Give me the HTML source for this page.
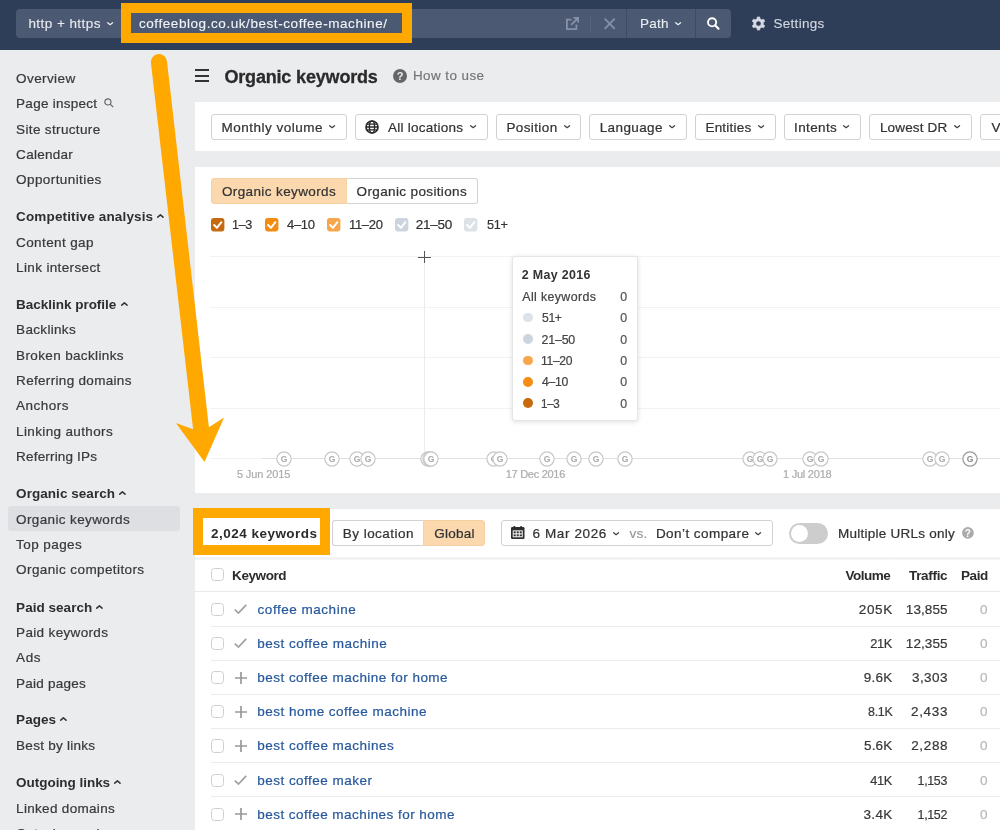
<!DOCTYPE html>
<html><head><meta charset="utf-8"><title>Organic keywords</title>
<style>
html,body{margin:0;padding:0;}
body{width:1000px;height:830px;overflow:hidden;position:relative;background:#ebecee;font-family:"Liberation Sans",sans-serif;}
.t{position:absolute;white-space:nowrap;-webkit-text-stroke:0.22px currentColor;}
.b{position:absolute;box-sizing:border-box;}
svg{position:absolute;overflow:visible;}
#wrap{position:absolute;left:0;top:0;width:1000px;height:830px;will-change:transform;}
</style></head><body><div id="wrap">
<div class="b" style="left:0px;top:0px;width:1000px;height:49.5px;background:#2e3e59;"></div>
<div class="b" style="left:16px;top:9px;width:715px;height:29px;background:#4c5972;border-radius:4px;"></div>
<div class="b" style="left:121px;top:9px;width:1px;height:29px;background:#3d4b64;"></div>
<div class="b" style="left:626px;top:9px;width:1px;height:29px;background:#3d4b64;"></div>
<div class="b" style="left:694.8px;top:9px;width:1px;height:29px;background:#3d4b64;"></div>
<div class="b" style="left:590px;top:17px;width:1px;height:14px;background:#59657d;"></div>
<div class="t " style="top:14.10px;font-size:13.5px;line-height:20px;color:#e9ecf1;letter-spacing:0.441px;left:28.41px;-webkit-text-stroke-width:0.12px;">http + https</div>
<svg style="left:107.3px;top:22.25px" width="6.2" height="3.5"><path d="M0.65 0.65 L3.1 2.7 L5.55 0.65" fill="none" stroke="#e9ecf1" stroke-width="1.3" stroke-linecap="round" stroke-linejoin="round"/></svg>
<div class="b" style="left:121px;top:3px;width:291px;height:40px;border:10px solid #ffa800;background:#4c5972;"></div>
<div class="t " style="top:13.80px;font-size:13.5px;line-height:20px;color:#f2f4f7;letter-spacing:0.565px;left:138.99px;-webkit-text-stroke-width:0.12px;">coffeeblog.co.uk/best-coffee-machine/</div>
<svg style="left:566px;top:16.6px" width="13" height="13" viewBox="0 0 13 13"><path d="M5.4 2.6H0.9V12.1H10.4V7.6" fill="none" stroke="#8791a7" stroke-width="1.8"/><path d="M7.4 0.9H12.1V5.6" fill="none" stroke="#8791a7" stroke-width="1.8"/><path d="M12 1 L5.2 7.8" stroke="#8791a7" stroke-width="1.8"/></svg>
<svg style="left:604px;top:17.6px" width="11.4" height="11.6"><path d="M0.7 0.7L10.7 10.9M10.7 0.7L0.7 10.9" stroke="#8791a7" stroke-width="1.8"/></svg>
<div class="t " style="top:14.10px;font-size:13.5px;line-height:20px;color:#e9ecf1;letter-spacing:0.217px;left:640.02px;-webkit-text-stroke-width:0.12px;">Path</div>
<svg style="left:674.8px;top:22.25px" width="6.2" height="3.5"><path d="M0.65 0.65 L3.1 2.7 L5.55 0.65" fill="none" stroke="#e9ecf1" stroke-width="1.3" stroke-linecap="round" stroke-linejoin="round"/></svg>
<svg style="left:705px;top:15px" width="16" height="16"><circle cx="7.1" cy="7.3" r="4.1" fill="none" stroke="#fff" stroke-width="1.9"/><path d="M10.3 10.5L13.5 13.7" stroke="#fff" stroke-width="2.2" stroke-linecap="round"/></svg>
<svg style="left:750.7px;top:15.8px" width="15" height="15" viewBox="0 0 15 15"><path fill="#d6dae2" fill-rule="evenodd" stroke="#d6dae2" stroke-width="0.6" stroke-linejoin="round" d="M5.99 2.84 L6.31 0.91 L8.69 0.91 L9.01 2.84 L10.78 3.86 L12.62 3.18 L13.80 5.23 L12.29 6.48 L12.29 8.52 L13.80 9.77 L12.62 11.82 L10.78 11.14 L9.01 12.16 L8.69 14.09 L6.31 14.09 L5.99 12.16 L4.22 11.14 L2.38 11.82 L1.20 9.77 L2.71 8.52 L2.71 6.48 L1.20 5.23 L2.38 3.18 L4.22 3.86 Z M4.90 7.50 a2.6 2.6 0 1 0 5.2 0 a2.6 2.6 0 1 0 -5.2 0 Z"/></svg>
<div class="t " style="top:14.10px;font-size:13.5px;line-height:20px;color:#d3d8e0;letter-spacing:0.282px;left:773.52px;-webkit-text-stroke-width:0.12px;">Settings</div>
<div class="b" style="left:8px;top:506.2px;width:171.6px;height:25.2px;background:#dddfe3;border-radius:3px;"></div>
<div class="t " style="top:68.80px;font-size:13.5px;line-height:20px;color:#393939;letter-spacing:0.400px;left:16.10px;">Overview</div>
<div class="t " style="top:94.30px;font-size:13.5px;line-height:20px;color:#393939;letter-spacing:0.268px;left:16.10px;">Page inspect</div>
<div class="t " style="top:119.60px;font-size:13.5px;line-height:20px;color:#393939;letter-spacing:0.347px;left:16.10px;">Site structure</div>
<div class="t " style="top:144.90px;font-size:13.5px;line-height:20px;color:#393939;letter-spacing:0.284px;left:16.10px;">Calendar</div>
<div class="t " style="top:170.20px;font-size:13.5px;line-height:20px;color:#393939;letter-spacing:0.411px;left:16.10px;">Opportunities</div>
<div class="t " style="top:207.20px;font-size:13.5px;line-height:20px;color:#2e2e2e;letter-spacing:0.142px;font-weight:700;-webkit-text-stroke-width:0;left:16.10px;">Competitive analysis</div>
<svg style="left:157.2px;top:214.25px" width="6.8" height="3.9"><path d="M0.75 3.15 L3.4 0.9 L6.05 3.15" fill="none" stroke="#333" stroke-width="1.5" stroke-linecap="round" stroke-linejoin="round"/></svg>
<div class="t " style="top:232.60px;font-size:13.5px;line-height:20px;color:#393939;letter-spacing:0.385px;left:16.10px;">Content gap</div>
<div class="t " style="top:257.80px;font-size:13.5px;line-height:20px;color:#393939;letter-spacing:0.358px;left:16.10px;">Link intersect</div>
<div class="t " style="top:294.80px;font-size:13.5px;line-height:20px;color:#2e2e2e;letter-spacing:-0.021px;font-weight:700;-webkit-text-stroke-width:0;left:16.10px;">Backlink profile</div>
<svg style="left:120.5px;top:301.85px" width="6.8" height="3.9"><path d="M0.75 3.15 L3.4 0.9 L6.05 3.15" fill="none" stroke="#333" stroke-width="1.5" stroke-linecap="round" stroke-linejoin="round"/></svg>
<div class="t " style="top:320.10px;font-size:13.5px;line-height:20px;color:#393939;letter-spacing:0.319px;left:16.10px;">Backlinks</div>
<div class="t " style="top:345.60px;font-size:13.5px;line-height:20px;color:#393939;letter-spacing:0.359px;left:16.10px;">Broken backlinks</div>
<div class="t " style="top:370.90px;font-size:13.5px;line-height:20px;color:#393939;letter-spacing:0.315px;left:16.10px;">Referring domains</div>
<div class="t " style="top:396.40px;font-size:13.5px;line-height:20px;color:#393939;letter-spacing:0.475px;left:16.10px;">Anchors</div>
<div class="t " style="top:421.80px;font-size:13.5px;line-height:20px;color:#393939;letter-spacing:0.356px;left:16.10px;">Linking authors</div>
<div class="t " style="top:447.10px;font-size:13.5px;line-height:20px;color:#393939;letter-spacing:0.175px;left:16.10px;">Referring IPs</div>
<div class="t " style="top:484.30px;font-size:13.5px;line-height:20px;color:#2e2e2e;letter-spacing:0.050px;font-weight:700;-webkit-text-stroke-width:0;left:16.10px;">Organic search</div>
<svg style="left:118.89999999999999px;top:491.35px" width="6.8" height="3.9"><path d="M0.75 3.15 L3.4 0.9 L6.05 3.15" fill="none" stroke="#333" stroke-width="1.5" stroke-linecap="round" stroke-linejoin="round"/></svg>
<div class="t " style="top:509.60px;font-size:13.5px;line-height:20px;color:#393939;letter-spacing:0.373px;left:16.10px;">Organic keywords</div>
<div class="t " style="top:535.00px;font-size:13.5px;line-height:20px;color:#393939;letter-spacing:0.417px;left:16.10px;">Top pages</div>
<div class="t " style="top:560.40px;font-size:13.5px;line-height:20px;color:#393939;letter-spacing:0.402px;left:16.10px;">Organic competitors</div>
<div class="t " style="top:597.90px;font-size:13.5px;line-height:20px;color:#2e2e2e;letter-spacing:0.035px;font-weight:700;-webkit-text-stroke-width:0;left:16.10px;">Paid search</div>
<svg style="left:96.1px;top:604.95px" width="6.8" height="3.9"><path d="M0.75 3.15 L3.4 0.9 L6.05 3.15" fill="none" stroke="#333" stroke-width="1.5" stroke-linecap="round" stroke-linejoin="round"/></svg>
<div class="t " style="top:622.70px;font-size:13.5px;line-height:20px;color:#393939;letter-spacing:0.336px;left:16.10px;">Paid keywords</div>
<div class="t " style="top:647.90px;font-size:13.5px;line-height:20px;color:#393939;letter-spacing:0.600px;left:16.10px;">Ads</div>
<div class="t " style="top:674.00px;font-size:13.5px;line-height:20px;color:#393939;letter-spacing:0.221px;left:16.10px;">Paid pages</div>
<div class="t " style="top:710.30px;font-size:13.5px;line-height:20px;color:#2e2e2e;letter-spacing:0.041px;font-weight:700;-webkit-text-stroke-width:0;left:16.10px;">Pages</div>
<svg style="left:60.1px;top:717.35px" width="6.8" height="3.9"><path d="M0.75 3.15 L3.4 0.9 L6.05 3.15" fill="none" stroke="#333" stroke-width="1.5" stroke-linecap="round" stroke-linejoin="round"/></svg>
<div class="t " style="top:735.60px;font-size:13.5px;line-height:20px;color:#393939;letter-spacing:0.267px;left:16.10px;">Best by links</div>
<div class="t " style="top:772.90px;font-size:13.5px;line-height:20px;color:#2e2e2e;letter-spacing:-0.037px;font-weight:700;-webkit-text-stroke-width:0;left:16.10px;">Outgoing links</div>
<svg style="left:114.2px;top:779.95px" width="6.8" height="3.9"><path d="M0.75 3.15 L3.4 0.9 L6.05 3.15" fill="none" stroke="#333" stroke-width="1.5" stroke-linecap="round" stroke-linejoin="round"/></svg>
<div class="t " style="top:798.70px;font-size:13.5px;line-height:20px;color:#393939;letter-spacing:0.314px;left:16.10px;">Linked domains</div>
<div class="t " style="top:824.20px;font-size:13.5px;line-height:20px;color:#393939;left:16.10px;">Outgoing anchors</div>
<svg style="left:103.9px;top:98.3px" width="10" height="10"><circle cx="3.9" cy="3.9" r="3.1" fill="none" stroke="#666" stroke-width="1.2"/><path d="M6.2 6.2L9.2 9.2" stroke="#666" stroke-width="1.2"/></svg>
<div class="b" style="left:195px;top:69.4px;width:14px;height:2px;background:#333;"></div>
<div class="b" style="left:195px;top:74.6px;width:14px;height:2px;background:#333;"></div>
<div class="b" style="left:195px;top:79.7px;width:14px;height:2px;background:#333;"></div>
<div class="t " style="top:66.80px;font-size:18.0px;line-height:20px;color:#2b2b2b;letter-spacing:-0.171px;font-weight:700;-webkit-text-stroke-width:0;left:224.40px;-webkit-text-stroke-width:0.3px;">Organic keywords</div>
<svg style="left:393px;top:69px" width="14" height="14"><circle cx="7" cy="7" r="7" fill="#666"/><text x="7" y="11" font-size="11" font-weight="700" fill="#ebecee" text-anchor="middle" font-family="Liberation Sans">?</text></svg>
<div class="t " style="top:65.90px;font-size:13.4px;line-height:20px;color:#777;letter-spacing:0.465px;left:412.89px;">How to use</div>
<div class="b" style="left:195px;top:102px;width:805px;height:49px;background:#fff;"></div>
<div class="b" style="left:211px;top:114px;width:135.5px;height:25.5px;background:#fff;border:1px solid #d2d2d2;border-radius:3px;"></div>
<div class="t " style="top:117.60px;font-size:13.5px;line-height:20px;color:#333;letter-spacing:0.502px;left:221.43px;">Monthly volume</div>
<svg style="left:329px;top:125.25px" width="6.2" height="3.5"><path d="M0.65 0.65 L3.1 2.7 L5.55 0.65" fill="none" stroke="#444" stroke-width="1.3" stroke-linecap="round" stroke-linejoin="round"/></svg>
<div class="b" style="left:355px;top:114px;width:133px;height:25.5px;background:#fff;border:1px solid #d2d2d2;border-radius:3px;"></div>
<div class="t " style="top:117.60px;font-size:13.5px;line-height:20px;color:#333;letter-spacing:0.242px;left:388.09px;">All locations</div>
<svg style="left:470px;top:125.25px" width="6.2" height="3.5"><path d="M0.65 0.65 L3.1 2.7 L5.55 0.65" fill="none" stroke="#444" stroke-width="1.3" stroke-linecap="round" stroke-linejoin="round"/></svg>
<div class="b" style="left:496px;top:114px;width:84.5px;height:25.5px;background:#fff;border:1px solid #d2d2d2;border-radius:3px;"></div>
<div class="t " style="top:117.60px;font-size:13.5px;line-height:20px;color:#333;letter-spacing:0.386px;left:506.43px;">Position</div>
<svg style="left:563.6px;top:125.25px" width="6.2" height="3.5"><path d="M0.65 0.65 L3.1 2.7 L5.55 0.65" fill="none" stroke="#444" stroke-width="1.3" stroke-linecap="round" stroke-linejoin="round"/></svg>
<div class="b" style="left:589px;top:114px;width:97.5px;height:25.5px;background:#fff;border:1px solid #d2d2d2;border-radius:3px;"></div>
<div class="t " style="top:117.60px;font-size:13.5px;line-height:20px;color:#333;letter-spacing:0.389px;left:599.72px;">Language</div>
<svg style="left:669px;top:125.25px" width="6.2" height="3.5"><path d="M0.65 0.65 L3.1 2.7 L5.55 0.65" fill="none" stroke="#444" stroke-width="1.3" stroke-linecap="round" stroke-linejoin="round"/></svg>
<div class="b" style="left:695px;top:114px;width:80.5px;height:25.5px;background:#fff;border:1px solid #d2d2d2;border-radius:3px;"></div>
<div class="t " style="top:117.60px;font-size:13.5px;line-height:20px;color:#333;letter-spacing:0.225px;left:705.42px;">Entities</div>
<svg style="left:758px;top:125.25px" width="6.2" height="3.5"><path d="M0.65 0.65 L3.1 2.7 L5.55 0.65" fill="none" stroke="#444" stroke-width="1.3" stroke-linecap="round" stroke-linejoin="round"/></svg>
<div class="b" style="left:783.5px;top:114px;width:77.5px;height:25.5px;background:#fff;border:1px solid #d2d2d2;border-radius:3px;"></div>
<div class="t " style="top:117.60px;font-size:13.5px;line-height:20px;color:#333;letter-spacing:0.358px;left:794.10px;">Intents</div>
<svg style="left:843.2px;top:125.25px" width="6.2" height="3.5"><path d="M0.65 0.65 L3.1 2.7 L5.55 0.65" fill="none" stroke="#444" stroke-width="1.3" stroke-linecap="round" stroke-linejoin="round"/></svg>
<div class="b" style="left:869px;top:114px;width:103px;height:25.5px;background:#fff;border:1px solid #d2d2d2;border-radius:3px;"></div>
<div class="t " style="top:117.60px;font-size:13.5px;line-height:20px;color:#333;letter-spacing:0.169px;left:879.92px;">Lowest DR</div>
<svg style="left:954px;top:125.25px" width="6.2" height="3.5"><path d="M0.65 0.65 L3.1 2.7 L5.55 0.65" fill="none" stroke="#444" stroke-width="1.3" stroke-linecap="round" stroke-linejoin="round"/></svg>
<div class="b" style="left:979.5px;top:114px;width:40px;height:25.5px;background:#fff;border:1px solid #d2d2d2;border-radius:3px;"></div>
<div class="t " style="top:117.60px;font-size:13.5px;line-height:20px;color:#333;left:991.39px;">Vo</div>
<svg style="left:365.3px;top:119.8px" width="14" height="14" viewBox="0 0 14 14"><circle cx="7" cy="7" r="6" fill="none" stroke="#2b2b2b" stroke-width="1.7"/><ellipse cx="7" cy="7" rx="2.6" ry="6" fill="none" stroke="#2b2b2b" stroke-width="1.4"/><path d="M1 7H13M1.9 4.1H12.1M1.9 9.9H12.1" stroke="#2b2b2b" stroke-width="1.3" fill="none"/></svg>
<div class="b" style="left:195px;top:166.5px;width:805px;height:326px;background:#fff;"></div>
<div class="b" style="left:210.9px;top:178.4px;width:136px;height:25.2px;background:#fbd8ae;border:1px solid #f7d0a0;border-radius:3px 0 0 3px;"></div>
<div class="b" style="left:346.5px;top:178.4px;width:131px;height:25.2px;background:#fff;border:1px solid #d2d2d2;border-left:none;border-radius:0 3px 3px 0;"></div>
<div class="t " style="top:181.80px;font-size:13.5px;line-height:20px;color:#333;letter-spacing:0.384px;left:221.93px;">Organic keywords</div>
<div class="t " style="top:181.80px;font-size:13.5px;line-height:20px;color:#333;letter-spacing:0.363px;left:356.62px;">Organic positions</div>
<svg style="left:210.9px;top:217.7px" width="13.4" height="13.4" viewBox="0 0 13.4 13.4"><rect width="13.4" height="13.4" rx="2.8" fill="#c66a10"/><path d="M3.1 7.0L5.9 9.8L10.4 4.2" fill="none" stroke="#fff" stroke-width="1.9" stroke-linecap="round" stroke-linejoin="round"/></svg>
<div class="t " style="top:215.10px;font-size:13.5px;line-height:20px;color:#333;letter-spacing:-0.350px;left:231.92px;transform:scaleX(0.9339);transform-origin:0 50%;">1–3</div>
<svg style="left:264.5px;top:217.7px" width="13.4" height="13.4" viewBox="0 0 13.4 13.4"><rect width="13.4" height="13.4" rx="2.8" fill="#f28c12"/><path d="M3.1 7.0L5.9 9.8L10.4 4.2" fill="none" stroke="#fff" stroke-width="1.9" stroke-linecap="round" stroke-linejoin="round"/></svg>
<div class="t " style="top:215.10px;font-size:13.5px;line-height:20px;color:#333;letter-spacing:-0.350px;left:286.95px;transform:scaleX(0.9667);transform-origin:0 50%;">4–10</div>
<svg style="left:327.3px;top:217.7px" width="13.4" height="13.4" viewBox="0 0 13.4 13.4"><rect width="13.4" height="13.4" rx="2.8" fill="#f7a64c"/><path d="M3.1 7.0L5.9 9.8L10.4 4.2" fill="none" stroke="#fff" stroke-width="1.9" stroke-linecap="round" stroke-linejoin="round"/></svg>
<div class="t " style="top:215.10px;font-size:13.5px;line-height:20px;color:#333;letter-spacing:-0.350px;left:348.59px;transform:scaleX(0.9643);transform-origin:0 50%;">11–20</div>
<svg style="left:394.5px;top:217.7px" width="13.4" height="13.4" viewBox="0 0 13.4 13.4"><rect width="13.4" height="13.4" rx="2.8" fill="#ccd5dd"/><path d="M3.1 7.0L5.9 9.8L10.4 4.2" fill="none" stroke="#fff" stroke-width="1.9" stroke-linecap="round" stroke-linejoin="round"/></svg>
<div class="t " style="top:215.10px;font-size:13.5px;line-height:20px;color:#333;letter-spacing:-0.294px;left:415.86px;">21–50</div>
<svg style="left:464.4px;top:217.7px" width="13.4" height="13.4" viewBox="0 0 13.4 13.4"><rect width="13.4" height="13.4" rx="2.8" fill="#dde2e7"/><path d="M3.1 7.0L5.9 9.8L10.4 4.2" fill="none" stroke="#fff" stroke-width="1.9" stroke-linecap="round" stroke-linejoin="round"/></svg>
<div class="t " style="top:215.10px;font-size:13.5px;line-height:20px;color:#333;letter-spacing:-0.350px;left:486.72px;transform:scaleX(0.9387);transform-origin:0 50%;">51+</div>
<div class="b" style="left:210px;top:256.2px;width:790px;height:1px;background:#f2f2f2;"></div>
<div class="b" style="left:210px;top:306.6px;width:790px;height:1px;background:#f2f2f2;"></div>
<div class="b" style="left:210px;top:357.4px;width:790px;height:1px;background:#f2f2f2;"></div>
<div class="b" style="left:210px;top:407.9px;width:790px;height:1px;background:#f2f2f2;"></div>
<div class="b" style="left:210px;top:458.4px;width:790px;height:1px;background:#f2f2f2;"></div>
<div class="b" style="left:262px;top:458.4px;width:738px;height:1px;background:#e0e0e0;"></div>
<div class="b" style="left:424px;top:257px;width:1px;height:202px;background:#ececec;"></div>
<div class="b" style="left:418.3px;top:256.5px;width:12.6px;height:1.7px;background:#555;"></div>
<div class="b" style="left:423.7px;top:251.3px;width:1.7px;height:12px;background:#555;"></div>
<svg style="left:276px;top:451px" width="16" height="16"><circle cx="8" cy="8" r="7.1" fill="#fff" stroke="#c8c8c8" stroke-width="1.2"/><text x="8" y="11.1" font-size="8.6" font-weight="700" fill="#a9a9a9" text-anchor="middle" font-family="Liberation Sans">G</text></svg>
<svg style="left:324px;top:451px" width="16" height="16"><circle cx="8" cy="8" r="7.1" fill="#fff" stroke="#c8c8c8" stroke-width="1.2"/><text x="8" y="11.1" font-size="8.6" font-weight="700" fill="#a9a9a9" text-anchor="middle" font-family="Liberation Sans">G</text></svg>
<svg style="left:348.8px;top:451px" width="16" height="16"><circle cx="8" cy="8" r="7.1" fill="#fff" stroke="#c8c8c8" stroke-width="1.2"/><text x="8" y="11.1" font-size="8.6" font-weight="700" fill="#a9a9a9" text-anchor="middle" font-family="Liberation Sans">G</text></svg>
<svg style="left:360.4px;top:451px" width="16" height="16"><circle cx="8" cy="8" r="7.1" fill="#fff" stroke="#c8c8c8" stroke-width="1.2"/><text x="8" y="11.1" font-size="8.6" font-weight="700" fill="#a9a9a9" text-anchor="middle" font-family="Liberation Sans">G</text></svg>
<svg style="left:419.6px;top:451px" width="16" height="16"><circle cx="8" cy="8" r="7.1" fill="#fff" stroke="#c8c8c8" stroke-width="1.2"/><text x="8" y="11.1" font-size="8.6" font-weight="700" fill="#a9a9a9" text-anchor="middle" font-family="Liberation Sans">G</text></svg>
<svg style="left:421.5px;top:451px" width="16" height="16"><circle cx="8" cy="8" r="7.1" fill="#fff" stroke="#c8c8c8" stroke-width="1.2"/><text x="8" y="11.1" font-size="8.6" font-weight="700" fill="#a9a9a9" text-anchor="middle" font-family="Liberation Sans">G</text></svg>
<svg style="left:423.4px;top:451px" width="16" height="16"><circle cx="8" cy="8" r="7.1" fill="#fff" stroke="#c8c8c8" stroke-width="1.2"/><text x="8" y="11.1" font-size="8.6" font-weight="700" fill="#a9a9a9" text-anchor="middle" font-family="Liberation Sans">G</text></svg>
<svg style="left:485.6px;top:451px" width="16" height="16"><circle cx="8" cy="8" r="7.1" fill="#fff" stroke="#c8c8c8" stroke-width="1.2"/><text x="8" y="11.1" font-size="8.6" font-weight="700" fill="#a9a9a9" text-anchor="middle" font-family="Liberation Sans">G</text></svg>
<svg style="left:492.2px;top:451px" width="16" height="16"><circle cx="8" cy="8" r="7.1" fill="#fff" stroke="#c8c8c8" stroke-width="1.2"/><text x="8" y="11.1" font-size="8.6" font-weight="700" fill="#a9a9a9" text-anchor="middle" font-family="Liberation Sans">G</text></svg>
<svg style="left:538.8px;top:451px" width="16" height="16"><circle cx="8" cy="8" r="7.1" fill="#fff" stroke="#c8c8c8" stroke-width="1.2"/><text x="8" y="11.1" font-size="8.6" font-weight="700" fill="#a9a9a9" text-anchor="middle" font-family="Liberation Sans">G</text></svg>
<svg style="left:566px;top:451px" width="16" height="16"><circle cx="8" cy="8" r="7.1" fill="#fff" stroke="#c8c8c8" stroke-width="1.2"/><text x="8" y="11.1" font-size="8.6" font-weight="700" fill="#a9a9a9" text-anchor="middle" font-family="Liberation Sans">G</text></svg>
<svg style="left:588.2px;top:451px" width="16" height="16"><circle cx="8" cy="8" r="7.1" fill="#fff" stroke="#c8c8c8" stroke-width="1.2"/><text x="8" y="11.1" font-size="8.6" font-weight="700" fill="#a9a9a9" text-anchor="middle" font-family="Liberation Sans">G</text></svg>
<svg style="left:616.6px;top:451px" width="16" height="16"><circle cx="8" cy="8" r="7.1" fill="#fff" stroke="#c8c8c8" stroke-width="1.2"/><text x="8" y="11.1" font-size="8.6" font-weight="700" fill="#a9a9a9" text-anchor="middle" font-family="Liberation Sans">G</text></svg>
<svg style="left:742px;top:451px" width="16" height="16"><circle cx="8" cy="8" r="7.1" fill="#fff" stroke="#c8c8c8" stroke-width="1.2"/><text x="8" y="11.1" font-size="8.6" font-weight="700" fill="#a9a9a9" text-anchor="middle" font-family="Liberation Sans">G</text></svg>
<svg style="left:751.8px;top:451px" width="16" height="16"><circle cx="8" cy="8" r="7.1" fill="#fff" stroke="#c8c8c8" stroke-width="1.2"/><text x="8" y="11.1" font-size="8.6" font-weight="700" fill="#a9a9a9" text-anchor="middle" font-family="Liberation Sans">G</text></svg>
<svg style="left:762px;top:451px" width="16" height="16"><circle cx="8" cy="8" r="7.1" fill="#fff" stroke="#c8c8c8" stroke-width="1.2"/><text x="8" y="11.1" font-size="8.6" font-weight="700" fill="#a9a9a9" text-anchor="middle" font-family="Liberation Sans">G</text></svg>
<svg style="left:802px;top:451px" width="16" height="16"><circle cx="8" cy="8" r="7.1" fill="#fff" stroke="#c8c8c8" stroke-width="1.2"/><text x="8" y="11.1" font-size="8.6" font-weight="700" fill="#a9a9a9" text-anchor="middle" font-family="Liberation Sans">G</text></svg>
<svg style="left:813.2px;top:451px" width="16" height="16"><circle cx="8" cy="8" r="7.1" fill="#fff" stroke="#c8c8c8" stroke-width="1.2"/><text x="8" y="11.1" font-size="8.6" font-weight="700" fill="#a9a9a9" text-anchor="middle" font-family="Liberation Sans">G</text></svg>
<svg style="left:922px;top:451px" width="16" height="16"><circle cx="8" cy="8" r="7.1" fill="#fff" stroke="#c8c8c8" stroke-width="1.2"/><text x="8" y="11.1" font-size="8.6" font-weight="700" fill="#a9a9a9" text-anchor="middle" font-family="Liberation Sans">G</text></svg>
<svg style="left:934px;top:451px" width="16" height="16"><circle cx="8" cy="8" r="7.1" fill="#fff" stroke="#c8c8c8" stroke-width="1.2"/><text x="8" y="11.1" font-size="8.6" font-weight="700" fill="#a9a9a9" text-anchor="middle" font-family="Liberation Sans">G</text></svg>
<svg style="left:962.3px;top:451px" width="16" height="16"><circle cx="8" cy="8" r="7.1" fill="#fff" stroke="#9a9a9a" stroke-width="1.2"/><text x="8" y="11.1" font-size="8.6" font-weight="700" fill="#8a8a8a" text-anchor="middle" font-family="Liberation Sans">G</text></svg>
<div class="t " style="top:463.80px;font-size:11px;line-height:20px;color:#adadad;letter-spacing:-0.107px;left:236.91px;">5 Jun 2015</div>
<div class="t " style="top:463.80px;font-size:11px;line-height:20px;color:#adadad;letter-spacing:-0.286px;left:505.74px;">17 Dec 2016</div>
<div class="t " style="top:463.80px;font-size:11px;line-height:20px;color:#adadad;letter-spacing:-0.226px;left:782.94px;">1 Jul 2018</div>
<div class="b" style="left:511.5px;top:256.3px;width:126px;height:165.2px;background:#fff;border:1px solid #e6e6e6;border-radius:3px;box-shadow:0 1px 5px rgba(0,0,0,0.13);"></div>
<div class="t " style="top:265.00px;font-size:12.4px;line-height:20px;color:#333;letter-spacing:0.356px;font-weight:700;-webkit-text-stroke-width:0;left:521.81px;">2 May 2016</div>
<div class="t " style="top:286.50px;font-size:12.4px;line-height:20px;color:#444;letter-spacing:0.373px;left:522.25px;">All keywords</div>
<div class="t " style="top:286.50px;font-size:12.4px;line-height:20px;color:#555;left:620.35px;">0</div>
<div class="b" style="left:523.3px;top:312.70000000000005px;width:9.8px;height:9.8px;background:#dde3ea;border-radius:50%;"></div>
<div class="t " style="top:308.20px;font-size:12.4px;line-height:20px;color:#444;letter-spacing:-0.350px;left:541.66px;transform:scaleX(0.9804);transform-origin:0 50%;">51+</div>
<div class="t " style="top:308.20px;font-size:12.4px;line-height:20px;color:#555;left:620.35px;">0</div>
<div class="b" style="left:523.3px;top:334.0px;width:9.8px;height:9.8px;background:#ccd5de;border-radius:50%;"></div>
<div class="t " style="top:329.50px;font-size:12.4px;line-height:20px;color:#444;letter-spacing:-0.178px;left:541.52px;">21–50</div>
<div class="t " style="top:329.50px;font-size:12.4px;line-height:20px;color:#555;left:620.35px;">0</div>
<div class="b" style="left:523.3px;top:355.5px;width:9.8px;height:9.8px;background:#f9a64c;border-radius:50%;"></div>
<div class="t " style="top:351.00px;font-size:12.4px;line-height:20px;color:#444;letter-spacing:-0.350px;left:541.23px;transform:scaleX(0.9784);transform-origin:0 50%;">11–20</div>
<div class="t " style="top:351.00px;font-size:12.4px;line-height:20px;color:#555;left:620.35px;">0</div>
<div class="b" style="left:523.3px;top:376.90000000000003px;width:9.8px;height:9.8px;background:#f58c16;border-radius:50%;"></div>
<div class="t " style="top:372.40px;font-size:12.4px;line-height:20px;color:#444;letter-spacing:-0.350px;left:541.90px;transform:scaleX(0.9883);transform-origin:0 50%;">4–10</div>
<div class="t " style="top:372.40px;font-size:12.4px;line-height:20px;color:#555;left:620.35px;">0</div>
<div class="b" style="left:523.3px;top:398.40000000000003px;width:9.8px;height:9.8px;background:#c8690d;border-radius:50%;"></div>
<div class="t " style="top:393.90px;font-size:12.4px;line-height:20px;color:#444;letter-spacing:-0.350px;left:541.27px;transform:scaleX(0.9412);transform-origin:0 50%;">1–3</div>
<div class="t " style="top:393.90px;font-size:12.4px;line-height:20px;color:#555;left:620.35px;">0</div>
<div class="b" style="left:195px;top:508.7px;width:805px;height:330px;background:#fff;"></div>
<div class="b" style="left:193px;top:508px;width:137px;height:47px;border:10px solid #ffa800;background:#fff;"></div>
<div class="t " style="top:523.80px;font-size:13.5px;line-height:20px;color:#2b2b2b;letter-spacing:0.468px;font-weight:700;-webkit-text-stroke-width:0;left:211.11px;">2,024 keywords</div>
<div class="b" style="left:332.2px;top:520.2px;width:91px;height:25.4px;background:#fff;border:1px solid #d2d2d2;border-right:none;border-radius:3px 0 0 3px;"></div>
<div class="b" style="left:423px;top:520.2px;width:61.6px;height:25.4px;background:#fbd8ae;border:1px solid #f7d0a0;border-radius:0 3px 3px 0;"></div>
<div class="t " style="top:523.80px;font-size:13.5px;line-height:20px;color:#333;letter-spacing:0.460px;left:342.82px;">By location</div>
<div class="t " style="top:523.80px;font-size:13.5px;line-height:20px;color:#333;letter-spacing:0.252px;left:434.16px;">Global</div>
<div class="b" style="left:500.5px;top:520.3px;width:272.5px;height:25.4px;background:#fff;border:1px solid #d2d2d2;border-radius:3px;"></div>
<svg style="left:511.3px;top:525.8px" width="13.5" height="13" viewBox="0 0 13.5 13"><rect x="0" y="1" width="13.5" height="12" rx="1.3" fill="#2e2e2e"/><rect x="2.5" y="0" width="1.7" height="2.4" rx="0.5" fill="#2e2e2e"/><rect x="9.3" y="0" width="1.7" height="2.4" rx="0.5" fill="#2e2e2e"/><rect x="1.7" y="4.3" width="10.1" height="7" fill="#ececec"/><g fill="#2e2e2e"><rect x="2.7" y="5.4" width="2" height="1.8"/><rect x="5.75" y="5.4" width="2" height="1.8"/><rect x="8.8" y="5.4" width="2" height="1.8"/><rect x="2.7" y="8.4" width="2" height="1.8"/><rect x="5.75" y="8.4" width="2" height="1.8"/><rect x="8.8" y="8.4" width="2" height="1.8"/></g></svg>
<div class="t " style="top:523.80px;font-size:13.5px;line-height:20px;color:#333;letter-spacing:0.615px;left:532.46px;">6 Mar 2026</div>
<svg style="left:613px;top:531.55px" width="6.2" height="3.5"><path d="M0.65 0.65 L3.1 2.7 L5.55 0.65" fill="none" stroke="#444" stroke-width="1.3" stroke-linecap="round" stroke-linejoin="round"/></svg>
<div class="t " style="top:523.80px;font-size:13.5px;line-height:20px;color:#999;letter-spacing:0.231px;left:629.49px;">vs.</div>
<div class="t " style="top:523.80px;font-size:13.5px;line-height:20px;color:#333;letter-spacing:0.440px;left:655.92px;">Don’t compare</div>
<svg style="left:755.3px;top:531.55px" width="6.2" height="3.5"><path d="M0.65 0.65 L3.1 2.7 L5.55 0.65" fill="none" stroke="#444" stroke-width="1.3" stroke-linecap="round" stroke-linejoin="round"/></svg>
<div class="b" style="left:788.8px;top:522.6px;width:39.2px;height:21.2px;background:#cdcdcd;border-radius:11px;"></div>
<div class="b" style="left:791px;top:524.7px;width:17px;height:17px;background:#fff;border-radius:50%;"></div>
<div class="t " style="top:523.80px;font-size:13.5px;line-height:20px;color:#333;letter-spacing:0.260px;left:837.92px;">Multiple URLs only</div>
<svg style="left:961.5px;top:527.3px" width="11.8" height="11.8"><circle cx="5.9" cy="5.9" r="5.9" fill="#ababab"/><text x="5.9" y="9.5" font-size="10" font-weight="700" fill="#fff" text-anchor="middle" font-family="Liberation Sans">?</text></svg>
<div class="b" style="left:195px;top:557px;width:805px;height:3px;background:linear-gradient(#f8f8f8,#f0f0f0 50%,#f8f8f8);"></div>
<div class="b" style="left:195px;top:591.3px;width:805px;height:1px;background:#e9e9e9;"></div>
<div class="b" style="left:211px;top:568.1999999999999px;width:13.2px;height:13.2px;background:#fff;border:1px solid #cfcfcf;border-radius:3.5px;"></div>
<div class="t " style="top:565.60px;font-size:13.5px;line-height:20px;color:#2b2b2b;letter-spacing:-0.425px;font-weight:700;-webkit-text-stroke-width:0;left:232.08px;">Keyword</div>
<div class="t " style="top:565.60px;font-size:13.5px;line-height:20px;color:#2b2b2b;letter-spacing:-0.477px;font-weight:700;-webkit-text-stroke-width:0;right:109.73px;">Volume</div>
<div class="t " style="top:565.60px;font-size:13.5px;line-height:20px;color:#2b2b2b;letter-spacing:-0.317px;font-weight:700;-webkit-text-stroke-width:0;right:52.73px;">Traffic</div>
<div class="t " style="top:565.60px;font-size:13.5px;line-height:20px;color:#2b2b2b;letter-spacing:-0.450px;font-weight:700;-webkit-text-stroke-width:0;right:12.27px;">Paid</div>
<div class="b" style="left:211px;top:602.85px;width:13.2px;height:13.2px;background:#fff;border:1px solid #cfcfcf;border-radius:3.5px;"></div>
<svg style="left:234px;top:604.25px" width="13" height="10"><path d="M0.8 5.6L4.5 9.1L12.2 0.9" fill="none" stroke="#a2a2a2" stroke-width="1.8"/></svg>
<div class="t " style="top:599.85px;font-size:13.5px;line-height:20px;color:#28599c;letter-spacing:0.524px;left:257.59px;">coffee machine</div>
<div class="t " style="top:599.85px;font-size:13.5px;line-height:20px;color:#383838;letter-spacing:0.625px;right:107.16px;">205K</div>
<div class="t " style="top:599.85px;font-size:13.5px;line-height:20px;color:#383838;letter-spacing:0.090px;right:52.37px;">13,855</div>
<div class="t " style="top:599.85px;font-size:13.5px;line-height:20px;color:#b8b8b8;right:12.59px;">0</div>
<div class="b" style="left:211px;top:625.6px;width:789px;height:1px;background:#ebebeb;"></div>
<div class="b" style="left:211px;top:636.98px;width:13.2px;height:13.2px;background:#fff;border:1px solid #cfcfcf;border-radius:3.5px;"></div>
<svg style="left:234px;top:638.38px" width="13" height="10"><path d="M0.8 5.6L4.5 9.1L12.2 0.9" fill="none" stroke="#a2a2a2" stroke-width="1.8"/></svg>
<div class="t " style="top:633.98px;font-size:13.5px;line-height:20px;color:#28599c;letter-spacing:0.499px;left:257.28px;">best coffee machine</div>
<div class="t " style="top:633.98px;font-size:13.5px;line-height:20px;color:#383838;letter-spacing:-0.350px;right:108.13px;transform:scaleX(0.9498);transform-origin:100% 50%;">21K</div>
<div class="t " style="top:633.98px;font-size:13.5px;line-height:20px;color:#383838;letter-spacing:0.090px;right:52.37px;">12,355</div>
<div class="t " style="top:633.98px;font-size:13.5px;line-height:20px;color:#b8b8b8;right:12.59px;">0</div>
<div class="b" style="left:211px;top:659.6px;width:789px;height:1px;background:#ebebeb;"></div>
<div class="b" style="left:211px;top:671.11px;width:13.2px;height:13.2px;background:#fff;border:1px solid #cfcfcf;border-radius:3.5px;"></div>
<svg style="left:234.5px;top:671.51px" width="12" height="12"><path d="M6 0V12M0 6H12" fill="none" stroke="#999" stroke-width="1.7"/></svg>
<div class="t " style="top:668.11px;font-size:13.5px;line-height:20px;color:#28599c;letter-spacing:0.471px;left:257.28px;">best coffee machine for home</div>
<div class="t " style="top:668.11px;font-size:13.5px;line-height:20px;color:#383838;letter-spacing:0.254px;right:107.54px;">9.6K</div>
<div class="t " style="top:668.11px;font-size:13.5px;line-height:20px;color:#383838;letter-spacing:0.478px;right:51.93px;">3,303</div>
<div class="t " style="top:668.11px;font-size:13.5px;line-height:20px;color:#b8b8b8;right:12.59px;">0</div>
<div class="b" style="left:211px;top:693.6px;width:789px;height:1px;background:#ebebeb;"></div>
<div class="b" style="left:211px;top:705.24px;width:13.2px;height:13.2px;background:#fff;border:1px solid #cfcfcf;border-radius:3.5px;"></div>
<svg style="left:234.5px;top:705.64px" width="12" height="12"><path d="M6 0V12M0 6H12" fill="none" stroke="#999" stroke-width="1.7"/></svg>
<div class="t " style="top:702.24px;font-size:13.5px;line-height:20px;color:#28599c;letter-spacing:0.482px;left:257.28px;">best home coffee machine</div>
<div class="t " style="top:702.24px;font-size:13.5px;line-height:20px;color:#383838;letter-spacing:-0.350px;right:108.13px;transform:scaleX(0.9200);transform-origin:100% 50%;">8.1K</div>
<div class="t " style="top:702.24px;font-size:13.5px;line-height:20px;color:#383838;letter-spacing:0.725px;right:51.68px;">2,433</div>
<div class="t " style="top:702.24px;font-size:13.5px;line-height:20px;color:#b8b8b8;right:12.59px;">0</div>
<div class="b" style="left:211px;top:727.6px;width:789px;height:1px;background:#ebebeb;"></div>
<div class="b" style="left:211px;top:739.37px;width:13.2px;height:13.2px;background:#fff;border:1px solid #cfcfcf;border-radius:3.5px;"></div>
<svg style="left:234.5px;top:739.77px" width="12" height="12"><path d="M6 0V12M0 6H12" fill="none" stroke="#999" stroke-width="1.7"/></svg>
<div class="t " style="top:736.37px;font-size:13.5px;line-height:20px;color:#28599c;letter-spacing:0.482px;left:257.28px;">best coffee machines</div>
<div class="t " style="top:736.37px;font-size:13.5px;line-height:20px;color:#383838;letter-spacing:0.133px;right:107.66px;">5.6K</div>
<div class="t " style="top:736.37px;font-size:13.5px;line-height:20px;color:#383838;letter-spacing:0.650px;right:51.76px;">2,288</div>
<div class="t " style="top:736.37px;font-size:13.5px;line-height:20px;color:#b8b8b8;right:12.59px;">0</div>
<div class="b" style="left:211px;top:761.6px;width:789px;height:1px;background:#ebebeb;"></div>
<div class="b" style="left:211px;top:773.5px;width:13.2px;height:13.2px;background:#fff;border:1px solid #cfcfcf;border-radius:3.5px;"></div>
<svg style="left:234px;top:774.9px" width="13" height="10"><path d="M0.8 5.6L4.5 9.1L12.2 0.9" fill="none" stroke="#a2a2a2" stroke-width="1.8"/></svg>
<div class="t " style="top:770.50px;font-size:13.5px;line-height:20px;color:#28599c;letter-spacing:0.473px;left:257.28px;">best coffee maker</div>
<div class="t " style="top:770.50px;font-size:13.5px;line-height:20px;color:#383838;letter-spacing:-0.350px;right:108.13px;transform:scaleX(0.9474);transform-origin:100% 50%;">41K</div>
<div class="t " style="top:770.50px;font-size:13.5px;line-height:20px;color:#383838;letter-spacing:-0.350px;right:52.77px;transform:scaleX(0.9200);transform-origin:100% 50%;">1,153</div>
<div class="t " style="top:770.50px;font-size:13.5px;line-height:20px;color:#b8b8b8;right:12.59px;">0</div>
<div class="b" style="left:211px;top:795.6px;width:789px;height:1px;background:#ebebeb;"></div>
<div class="b" style="left:211px;top:807.63px;width:13.2px;height:13.2px;background:#fff;border:1px solid #cfcfcf;border-radius:3.5px;"></div>
<svg style="left:234.5px;top:808.03px" width="12" height="12"><path d="M6 0V12M0 6H12" fill="none" stroke="#999" stroke-width="1.7"/></svg>
<div class="t " style="top:804.63px;font-size:13.5px;line-height:20px;color:#28599c;letter-spacing:0.459px;left:257.28px;">best coffee machines for home</div>
<div class="t " style="top:804.63px;font-size:13.5px;line-height:20px;color:#383838;letter-spacing:0.312px;right:107.48px;">3.4K</div>
<div class="t " style="top:804.63px;font-size:13.5px;line-height:20px;color:#383838;letter-spacing:-0.350px;right:52.66px;transform:scaleX(0.9200);transform-origin:100% 50%;">1,152</div>
<div class="t " style="top:804.63px;font-size:13.5px;line-height:20px;color:#b8b8b8;right:12.59px;">0</div>
<svg style="left:0;top:0" width="1000" height="830"><path d="M150.9 62.5 A8.05 8.05 0 0 1 167 61.5 L208.9 427.2 L224.1 417.6 L204.5 462 L175.9 423.1 L193.1 429.2 Z" fill="#ffa800"/></svg>
</div></body></html>
